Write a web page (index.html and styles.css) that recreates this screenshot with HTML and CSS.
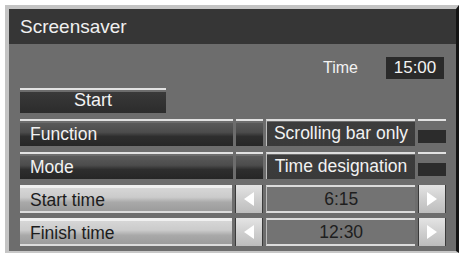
FILE: index.html
```html
<!DOCTYPE html>
<html>
<head>
<meta charset="utf-8">
<link rel="stylesheet" href="styles.css">
</head>
<body>
<div class="panel">
  <div class="title">Screensaver</div>
  <div class="content">
    <div class="time-row">
      <span class="time-label">Time</span>
      <span class="time-val">15:00</span>
    </div>
    <div class="row row-start">
      <div class="seg dark start">Start</div>
    </div>
    <div class="row">
      <div class="seg dark label">Function</div>
      <div class="seg dark small"></div>
      <div class="val dark-val">Scrolling bar only</div>
      <div class="seg side"></div>
    </div>
    <div class="row">
      <div class="seg dark label">Mode</div>
      <div class="seg dark small"></div>
      <div class="val dark-val">Time designation</div>
      <div class="seg side"></div>
    </div>
    <div class="row light-row">
      <div class="seg light label">Start time</div>
      <div class="arrow"><svg width="26" height="28" viewBox="0 0 26 28"><polygon points="8,14 18,7 18,21" fill="#fff"/></svg></div>
      <div class="val light-val">6:15</div>
      <div class="arrow"><svg width="26" height="28" viewBox="0 0 26 28"><polygon points="18,14 8,7 8,21" fill="#fff"/></svg></div>
    </div>
    <div class="row light-row">
      <div class="seg light label">Finish time</div>
      <div class="arrow"><svg width="26" height="28" viewBox="0 0 26 28"><polygon points="8,14 18,7 18,21" fill="#fff"/></svg></div>
      <div class="val light-val">12:30</div>
      <div class="arrow"><svg width="26" height="28" viewBox="0 0 26 28"><polygon points="18,14 8,7 8,21" fill="#fff"/></svg></div>
    </div>
  </div>
</div>
</body>
</html>
```
FILE: styles.css
```css
html, body {
  margin: 0;
  padding: 0;
  background: #ffffff;
}
body {
  font-family: "Liberation Sans", Arial, sans-serif;
}
.panel {
  margin: 5px 0 0 5px;
  width: 447px;
  border-top: 4px solid #c4c4c4;
  border-left: 4px solid #c4c4c4;
  border-right: 3px solid #141414;
  border-bottom: 2px solid #c8c8c8;
  background: #6d6d6d;
}
.title {
  height: 35px;
  background: #363636;
  color: #f0f0f0;
  font-size: 19px;
  line-height: 35px;
  padding-left: 11px;
  box-sizing: border-box;
}
.content {
  padding: 13px 10px 5px 11px;
  height: 207px;
  box-sizing: border-box;
}
.time-row {
  display: flex;
  justify-content: flex-end;
  align-items: center;
  height: 22px;
  padding-right: 2px;
}
.time-label {
  color: #f2f2f2;
  font-size: 16px;
  margin-right: 28px;
}
.time-val {
  background: #2a2a2a;
  color: #f2f2f2;
  font-size: 17px;
  width: 58px;
  height: 22px;
  line-height: 22px;
  text-align: center;
}
.row {
  display: flex;
  height: 27px;
  margin-top: 6px;
  gap: 3px;
}
.row-start {
  margin-top: 9px;
  height: 25px;
}
.light-row {
  height: 28px;
  margin-top: 6px;
}
.light-row + .light-row {
  margin-top: 5px;
}
.seg {
  box-sizing: border-box;
  font-size: 17.5px;
}
.dark {
  border-top: 2px solid #e2e2e2;
  background: linear-gradient(#6d6d6d 0, #6d6d6d 2px, #5a5a5a 2px, #4c4c4c 45%, #2e2e2e 62%, #262626 100%);
  color: #f2f2f2;
}
.label {
  width: 213px;
  padding-left: 10px;
  display: flex;
  align-items: center;
  padding-top: 2px;
}
.start {
  width: 146px;
  text-align: center;
  line-height: 21px;
  background: linear-gradient(#6d6d6d 0, #6d6d6d 2px, #3a3a3a 2px, #333 50%, #2c2c2c 100%);
  font-size: 18px;
}
.small {
  width: 27px;
}
.side {
  width: 28px;
  border-top: 2px solid #e2e2e2;
  position: relative;
}
.side::after {
  content: "";
  display: block;
  margin-top: 9px;
  height: 13px;
  background: #2c2c2c;
}
.val {
  width: 149px;
  box-sizing: border-box;
  font-size: 17.5px;
  text-align: center;
}
.dark-val {
  border-top: 2px solid #dedede;
  border-left: 1px solid #bdbdbd;
  background: linear-gradient(#6d6d6d 0, #6d6d6d 1px, #3d3d3d 1px, #3a3a3a 100%);
  color: #f2f2f2;
  line-height: 24px;
}
.light {
  border-top: 3px solid #f0f0f0;
  border-bottom: 2px solid #dcdcdc;
  background: linear-gradient(#d6d6d6 0, #cbcbcb 40%, #a9a9a9 62%, #9c9c9c 100%);
  color: #1c1c1c;
}
.light-val {
  border-top: 2px solid #dcdcdc;
  border-bottom: 2px solid #dcdcdc;
  border-left: 1px solid #bdbdbd;
  background: #737373;
  color: #1e1e1e;
  line-height: 24px;
}
.arrow {
  width: 28px;
  box-sizing: border-box;
  border-left: 1px solid #3a3a3a;
  border-right: 1px solid #3a3a3a;
  background: linear-gradient(#e4e4e4, #cfcfcf 50%, #bdbdbd);
  display: flex;
  align-items: center;
  justify-content: center;
}
.arrow svg {
  display: block;
}
```
